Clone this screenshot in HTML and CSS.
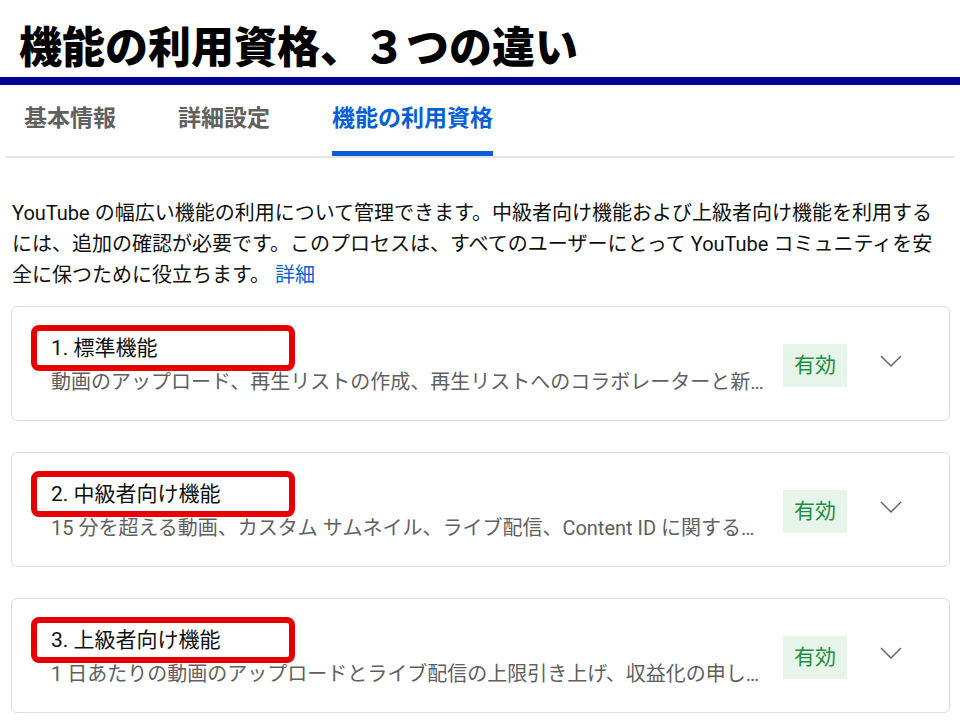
FILE: index.html
```html
<!DOCTYPE html>
<html>
<head>
  <link rel="stylesheet" href="styles.css">
</head>
<body>
  <div class="slide-title">機能の利用資格、３つの違い</div>
  <div class="title-bar"></div>

  <div class="tabs">
    <div class="tab">基本情報</div>
    <div class="tab">詳細設定</div>
    <div class="tab active">機能の利用資格</div>
  </div>

  <p class="intro">YouTube の幅広い機能の利用について管理できます。中級者向け機能および上級者向け機能を利用するには、追加の確認が必要です。このプロセスは、すべてのユーザーにとって YouTube コミュニティを安全に保つために役立ちます。 <a href="#" class="link">詳細</a></p>

  <div class="card">
    <div class="card-text">
      <div class="card-title">1. 標準機能<span class="mark"></span></div>
      <div class="card-sub">動画のアップロード、再生リストの作成、再生リストへのコラボレーターと新規ユーザーの追加</div>
    </div>
    <span class="badge">有効</span>
    <svg class="chevron" width="24" height="24" viewBox="0 0 24 24"><path d="M2 7l10 10 10-10" fill="none" stroke="#606060" stroke-width="1.4"/></svg>
  </div>

  <div class="card">
    <div class="card-text">
      <div class="card-title">2. 中級者向け機能<span class="mark"></span></div>
      <div class="card-sub">15 分を超える動画、カスタム サムネイル、ライブ配信、Content ID に関する申し立て</div>
    </div>
    <span class="badge">有効</span>
    <svg class="chevron" width="24" height="24" viewBox="0 0 24 24"><path d="M2 7l10 10 10-10" fill="none" stroke="#606060" stroke-width="1.4"/></svg>
  </div>

  <div class="card">
    <div class="card-text">
      <div class="card-title">3. 上級者向け機能<span class="mark"></span></div>
      <div class="card-sub">1 日あたりの動画のアップロードとライブ配信の上限引き上げ、収益化の申し込み</div>
    </div>
    <span class="badge">有効</span>
    <svg class="chevron" width="24" height="24" viewBox="0 0 24 24"><path d="M2 7l10 10 10-10" fill="none" stroke="#606060" stroke-width="1.4"/></svg>
  </div>
</body>
</html>
```

FILE: styles.css
```css
body {
  margin: 0;
  background-color: #fff;
  font-family: Roboto, "Noto Sans CJK JP", sans-serif;
  color: #0f0f0f;
  width: 960px;
  height: 720px;
  overflow: hidden;
}

.slide-title {
  padding: 18px 0 0 19px;
  height: 59px;
  font-size: 43px;
  line-height: 52px;
  font-weight: 900;
  color: #000;
  font-family: "Noto Sans CJK JP", sans-serif;
}

.title-bar {
  height: 8px;
  background-color: #000096;
}

.tabs {
  display: flex;
  gap: 62px;
  margin: 0 5px;
  padding-left: 19px;
  border-bottom: 2px solid #e5e5e5;
  height: 71px;
}

.tab {
  font-size: 23px;
  font-weight: 700;
  color: #606060;
  padding-top: 18px;
  line-height: 32px;
  box-sizing: border-box;
  height: 71px;
}

.tab.active {
  color: #065fd4;
  border-bottom: 5px solid #065fd4;
  border-radius: 4px 4px 0 0;
}

.intro {
  margin: 40px 0 15px 12px;
  width: 935px;
  font-size: 20px;
  line-height: 31px;
}

.link {
  color: #065fd4;
  text-decoration: none;
}

.card {
  display: flex;
  align-items: center;
  margin: 0 10px 31px 11px;
  border: 1px solid #dcdcdc;
  border-radius: 6px;
  height: 115px;
  box-sizing: border-box;
  padding: 3px 0 0 39px;
}

.card-text {
  flex: 1;
  min-width: 0;
}

.card-title {
  position: relative;
  font-size: 21px;
  line-height: 30px;
  color: #0f0f0f;
}

.mark {
  position: absolute;
  left: -20px;
  top: -8px;
  width: 264px;
  height: 46px;
  box-sizing: border-box;
  border: 6px solid #e60000;
  border-radius: 8px;
}

.card-sub {
  margin-top: 4px;
  font-size: 20px;
  line-height: 30px;
  color: #606060;
  white-space: nowrap;
  overflow: hidden;
  text-overflow: ellipsis;
  padding-right: 16px;
}

.badge {
  background-color: #e6f4ea;
  color: #1e8e3e;
  font-size: 21px;
  line-height: 43px;
  padding: 0 11px;
  margin-right: 32px;
}

.chevron {
  margin-right: 46px;
  margin-top: -8px;
}
```
